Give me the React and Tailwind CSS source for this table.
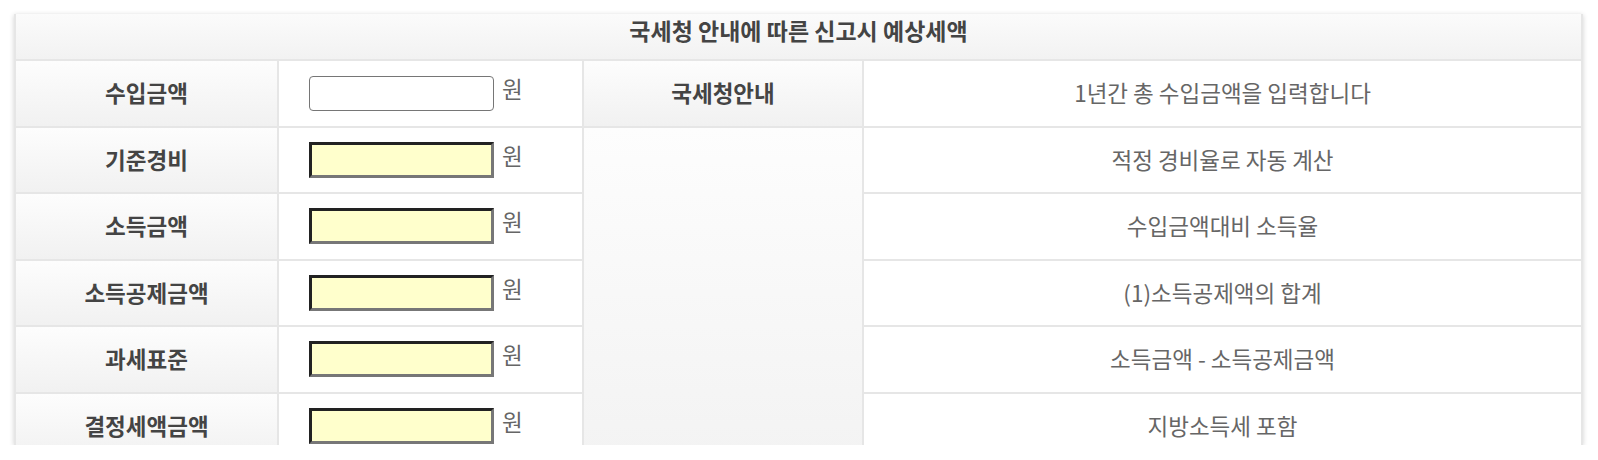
const rows = [
  { label: "수입금액", note: "1년간 총 수입금액을 입력합니다", editable: true },
  { label: "기준경비", note: "적정 경비율로 자동 계산" },
  { label: "소득금액", note: "수입금액대비 소득율" },
  { label: "소득공제금액", note: "(1)소득공제액의 합계" },
  { label: "과세표준", note: "소득금액 - 소득공제금액" },
  { label: "결정세액금액", note: "지방소득세 포함" },
];

function AmountInput({ editable }) {
  if (editable) {
    return (
      <input
        type="text"
        className="w-[185px] h-[35px] rounded-[4px] border border-[#767676] bg-white px-2 text-[16px] outline-none"
      />
    );
  }
  return (
    <input
      type="text"
      readOnly
      className="w-[185px] h-[36px] border-[3px] border-t-[#222] border-l-[#222] border-r-[#777] border-b-[#777] bg-[#ffffcc] px-2 text-[16px] outline-none"
    />
  );
}

export default function App() {
  const labelCell =
    "border-2 border-[#e6e6e6] bg-gradient-to-b from-[#fdfdfd] to-[#f1f1f1] text-center font-bold text-[#444] text-[22.5px]";

  return (
    <div className="pt-[14px] pl-[14px] font-['Noto_Sans_CJK_KR','Noto_Sans',sans-serif] text-[22.5px]">
      <div className="w-[1569px] h-[431px] overflow-hidden bg-white shadow-[0_1px_5px_rgba(0,0,0,0.18)]">
        <table className="w-full table-fixed border-collapse">
          <colgroup>
            <col className="w-[263px]" />
            <col className="w-[305px]" />
            <col className="w-[280px]" />
            <col />
          </colgroup>
          <thead>
            <tr className="h-[46px]">
              <th
                colSpan={4}
                className="border-2 border-t-0 border-[#e6e6e6] bg-gradient-to-b from-[#fbfbfb] to-[#f2f2f2] pb-[12px] text-center text-[23px] leading-[1.2] font-bold text-[#444]"
              >
                국세청 안내에 따른 신고시 예상세액
              </th>
            </tr>
          </thead>
          <tbody>
            {rows.map((row, i) => (
              <tr key={row.label} className="h-[66.5px]">
                <td className={labelCell}>{row.label}</td>
                <td className="border-2 border-[#e6e6e6] pl-[30px]">
                  <div className="flex items-center gap-[8px] text-[#666]">
                    <AmountInput editable={row.editable} />
                    <span className="-mt-[8px]">원</span>
                  </div>
                </td>
                {i === 0 && <td className={labelCell}>국세청안내</td>}
                {i === 1 && (
                  <td
                    rowSpan={5}
                    className="border-2 border-[#e6e6e6] bg-gradient-to-b from-[#fdfdfd] to-[#f3f3f3]"
                  />
                )}
                <td className="border-2 border-[#e6e6e6] text-center text-[#666]">
                  {row.note}
                </td>
              </tr>
            ))}
          </tbody>
        </table>
      </div>
    </div>
  );
}
